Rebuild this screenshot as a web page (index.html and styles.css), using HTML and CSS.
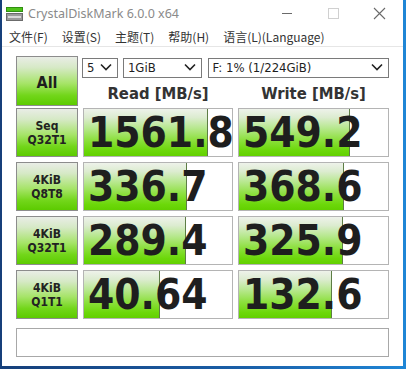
FILE: index.html
```html
<!DOCTYPE html>
<html lang="zh-CN">
<head>
    <meta charset="UTF-8">
    <meta name="viewport" content="width=device-width, initial-scale=1.0">
    <title>CrystalDiskMark 6.0.0 x64</title>
    <link rel="stylesheet" href="styles.css">
</head>
<body>
    <div class="window">
        <div class="titlebar">
            <svg class="app-icon" width="17" height="14" viewBox="0 0 17 14">
                <rect x="0.5" y="0.5" width="16" height="4" fill="#4fc21a" stroke="#2f8f10"/>
                <rect x="0.5" y="6.5" width="16" height="7" fill="#9a9a9a" stroke="#6b6b6b"/>
                <rect x="2" y="9" width="13" height="2" fill="#d8d8d8"/>
            </svg>
            <span class="title">CrystalDiskMark 6.0.0 x64</span>
            <div class="controls">
                <svg width="46" height="27" viewBox="0 0 46 27"><line x1="18" y1="13.5" x2="28" y2="13.5" stroke="#6a6a6a"/></svg>
                <svg width="46" height="27" viewBox="0 0 46 27"><rect x="18.5" y="8.5" width="10" height="10" fill="none" stroke="#d0d0d0"/></svg>
                <svg width="46" height="27" viewBox="0 0 46 27"><path d="M18 8 L29 19 M29 8 L18 19" stroke="#6a6a6a" stroke-width="1.1"/></svg>
            </div>
        </div>

        <div class="menubar">
            <span>文件(F)</span>
            <span>设置(S)</span>
            <span>主题(T)</span>
            <span>帮助(H)</span>
            <span>语言(L)(Language)</span>
        </div>

        <div class="content">
            <div class="top">
                <button class="all">All</button>
                <div class="selects">
                    <div class="select s-count">
                        <select><option>5</option></select>
                        <svg class="chevron" width="12" height="8" viewBox="0 0 12 8"><path d="M1 1.5 L6 6.5 L11 1.5" fill="none" stroke="#222" stroke-width="1.6"/></svg>
                    </div>
                    <div class="select s-size">
                        <select><option>1GiB</option></select>
                        <svg class="chevron" width="12" height="8" viewBox="0 0 12 8"><path d="M1 1.5 L6 6.5 L11 1.5" fill="none" stroke="#222" stroke-width="1.6"/></svg>
                    </div>
                    <div class="select s-drive">
                        <select><option>F: 1% (1/224GiB)</option></select>
                        <svg class="chevron" width="12" height="8" viewBox="0 0 12 8"><path d="M1 1.5 L6 6.5 L11 1.5" fill="none" stroke="#222" stroke-width="1.6"/></svg>
                    </div>
                </div>
                <div class="col-head">Read [MB/s]</div>
                <div class="col-head">Write [MB/s]</div>
            </div>

            <div class="results">
                <div class="label">Seq<br>Q32T1</div>
                <div class="meter"><div class="fill" style="width:124px"></div><span class="value">1561.8</span></div>
                <div class="meter"><div class="fill" style="width:111px"></div><span class="value">549.2</span></div>

                <div class="label">4KiB<br>Q8T8</div>
                <div class="meter"><div class="fill" style="width:103px"></div><span class="value">336.7</span></div>
                <div class="meter"><div class="fill" style="width:105px"></div><span class="value">368.6</span></div>

                <div class="label">4KiB<br>Q32T1</div>
                <div class="meter"><div class="fill" style="width:102px"></div><span class="value">289.4</span></div>
                <div class="meter"><div class="fill" style="width:104px"></div><span class="value">325.9</span></div>

                <div class="label">4KiB<br>Q1T1</div>
                <div class="meter"><div class="fill" style="width:76px"></div><span class="value">40.64</span></div>
                <div class="meter"><div class="fill" style="width:93px"></div><span class="value">132.6</span></div>
            </div>

            <div class="comment"></div>
        </div>
    </div>
</body>
</html>
```

FILE: styles.css
```css
html, body {
    margin: 0;
    padding: 0;
}
body {
    width: 406px;
    height: 369px;
    overflow: hidden;
    background: linear-gradient(to right, #163f7a, #1a5fa8 60%, #1f86d6);
}
.window {
    width: 401px;
    height: 366px;
    margin-left: 2px;
    background-color: #fff;
    font-family: "DejaVu Sans Condensed", "DejaVu Sans", sans-serif;
    color: #222;
}
.titlebar {
    height: 27px;
    display: flex;
    align-items: center;
    background-color: #fff;
}
.app-icon {
    margin-left: 4px;
    margin-right: 5px;
}
.title {
    font-family: "Noto Sans", "Noto Sans CJK SC", sans-serif;
    font-size: 12.5px;
    color: #8a8a8a;
    flex: 1;
}
.controls {
    display: flex;
    margin-right: 1px;
}
.menubar {
    height: 19px;
    display: flex;
    align-items: center;
    gap: 14px;
    padding-left: 7px;
    font-family: "Noto Sans CJK SC", sans-serif;
    font-size: 12px;
    color: #333;
    border-bottom: 1px solid #e6e6e6;
}
.content {
    padding: 9px 0 0 14px;
}
.top {
    display: grid;
    grid-template-columns: 62px 150px 151px;
    grid-template-rows: 21px 29px;
    column-gap: 5px;
}
.all {
    grid-row: 1 / 3;
    border: 1px solid #8c8c8c;
    background: linear-gradient(to bottom, #e9ede6 0%, #d6e9c6 22%, #a6e468 55%, #72d61a 80%, #5ccb00 100%);
    font-family: "DejaVu Sans Condensed", "DejaVu Sans", sans-serif;
    font-weight: bold;
    font-size: 16px;
    color: #1e1e1e;
    padding: 0;
    padding-top: 2px;
}
.selects {
    grid-column: 2 / 4;
    display: flex;
    margin-top: 1px;
    margin-left: -1px;
    height: 20px;
}
.select {
    position: relative;
    height: 20px;
}
.select select {
    appearance: none;
    -webkit-appearance: none;
    width: 100%;
    height: 20px;
    border: 1px solid #7a7a7a;
    border-radius: 0;
    background-color: #fff;
    font-family: "DejaVu Sans Condensed", "DejaVu Sans", sans-serif;
    font-size: 13px;
    color: #1e1e1e;
    padding: 0 0 0 4px;
    margin: 0;
}
.chevron {
    position: absolute;
    right: 6px;
    top: 6px;
    pointer-events: none;
}
.s-count {
    width: 36px;
}
.s-size {
    width: 79px;
    margin-left: 5px;
}
.s-drive {
    width: 182px;
    margin-left: 6px;
}
.col-head {
    font-weight: bold;
    font-size: 16.5px;
    color: #333;
    text-align: center;
    padding-top: 7px;
}
.results {
    margin-top: 2px;
    display: grid;
    grid-template-columns: 62px 150px 151px;
    grid-auto-rows: 49px;
    column-gap: 5px;
    row-gap: 5px;
}
.label {
    box-sizing: border-box;
    border: 1px solid #8c8c8c;
    background: linear-gradient(to bottom, #e9ede6 0%, #d6e9c6 22%, #a6e468 55%, #72d61a 80%, #5ccb00 100%);
    display: flex;
    align-items: center;
    justify-content: center;
    text-align: center;
    font-weight: bold;
    font-size: 12px;
    line-height: 14px;
    color: #222;
}
.meter {
    position: relative;
    box-sizing: border-box;
    border: 1px solid #b4b4b4;
    background-color: #fff;
    overflow: hidden;
    display: flex;
    align-items: center;
}
.fill {
    position: absolute;
    left: 0;
    top: 0;
    bottom: 0;
    box-sizing: border-box;
    border-right: 1px solid #5d7d45;
    background: linear-gradient(to bottom, #eef2ea 0%, #dcecd0 18%, #b8e890 40%, #8ee040 65%, #6cd80a 88%, #62d000 100%);
}
.value {
    position: relative;
    font-weight: bold;
    font-size: 42px;
    line-height: 1;
    color: #1e1e1e;
    padding-left: 4px;
    white-space: nowrap;
}
.comment {
    box-sizing: border-box;
    width: 373px;
    height: 29px;
    margin-top: 9px;
    border: 1px solid #a8a8a8;
    background-color: #fff;
}
```
